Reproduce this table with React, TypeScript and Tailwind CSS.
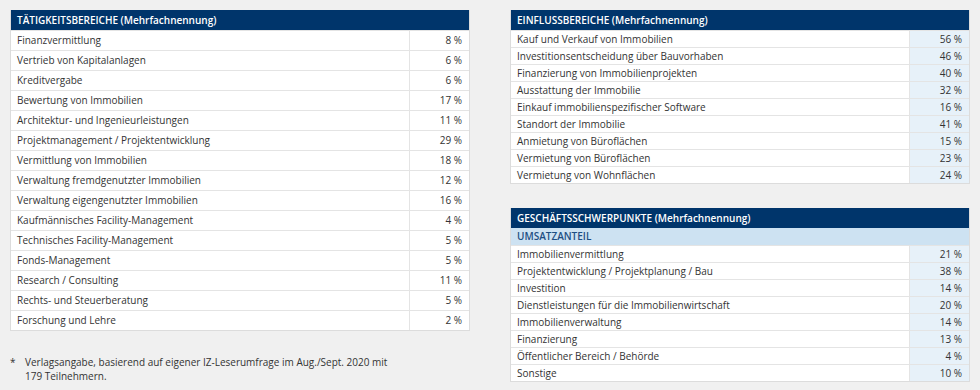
const taetigkeit: [string, string][] = [
  ['Finanzvermittlung', '8 %'],
  ['Vertrieb von Kapitalanlagen', '6 %'],
  ['Kreditvergabe', '6 %'],
  ['Bewertung von Immobilien', '17 %'],
  ['Architektur- und Ingenieurleistungen', '11 %'],
  ['Projektmanagement / Projektentwicklung', '29 %'],
  ['Vermittlung von Immobilien', '18 %'],
  ['Verwaltung fremdgenutzter Immobilien', '12 %'],
  ['Verwaltung eigengenutzter Immobilien', '16 %'],
  ['Kaufmännisches Facility-Management', '4 %'],
  ['Technisches Facility-Management', '5 %'],
  ['Fonds-Management', '5 %'],
  ['Research / Consulting', '11 %'],
  ['Rechts- und Steuerberatung', '5 %'],
  ['Forschung und Lehre', '2 %'],
];

const einfluss: [string, string][] = [
  ['Kauf und Verkauf von Immobilien', '56 %'],
  ['Investitionsentscheidung über Bauvorhaben', '46 %'],
  ['Finanzierung von Immobilienprojekten', '40 %'],
  ['Ausstattung der Immobilie', '32 %'],
  ['Einkauf immobilienspezifischer Software', '16 %'],
  ['Standort der Immobilie', '41 %'],
  ['Anmietung von Büroflächen', '15 %'],
  ['Vermietung von Büroflächen', '23 %'],
  ['Vermietung von Wohnflächen', '24 %'],
];

const schwerpunkte: [string, string][] = [
  ['Immobilienvermittlung', '21 %'],
  ['Projektentwicklung / Projektplanung / Bau', '38 %'],
  ['Investition', '14 %'],
  ['Dienstleistungen für die Immobilienwirtschaft', '20 %'],
  ['Immobilienverwaltung', '14 %'],
  ['Finanzierung', '13 %'],
  ['Öffentlicher Bereich / Behörde', '4 %'],
  ['Sonstige', '10 %'],
];

function Header({ title }: { title: string }) {
  return (
    <div className="h-[20px] bg-[#00356b] px-[6px] text-[10px] font-semibold leading-[20px] text-white">
      {title}
    </div>
  );
}

function Row({ label, value, tall, tinted }: { label: string; value: string; tall?: boolean; tinted?: boolean }) {
  return (
    <div className={`flex border-t border-[#e4e4e4] ${tall ? 'h-[20px] leading-[19px]' : 'h-[17px] leading-[16px]'}`}>
      <div className="flex-1 bg-white px-[6px]">{label}</div>
      <div className={`w-[60px] border-l border-[#e4e4e4] pr-[7px] text-right ${tinted ? 'bg-[#e7f1f9]' : 'bg-white'}`}>
        {value}
      </div>
    </div>
  );
}

export default function App() {
  return (
    <div
      className="flex h-[390px] w-[980px] gap-[40px] bg-[#f0f0f0] px-[10px] pt-[10px] text-[10px] text-[#333]"
      style={{ fontFamily: '"Open Sans", sans-serif' }}
    >
      <div className="flex w-[460px] flex-col">
        <div className="border border-t-0 border-[#dcdcdc] bg-white">
          <Header title="TÄTIGKEITSBEREICHE (Mehrfachnennung)" />
          {taetigkeit.map(([l, v], i) => (
            <Row key={i} label={l} value={v} tall />
          ))}
        </div>
        <div className="mt-[24px] flex leading-[14px]">
          <span className="w-[15px]">*</span>
          <span className="w-[380px]">
            Verlagsangabe, basierend auf eigener IZ-Leserumfrage im Aug./Sept. 2020 mit 179 Teilnehmern.
          </span>
        </div>
      </div>

      <div className="flex w-[460px] flex-col">
        <div className="border border-t-0 border-[#dcdcdc] bg-white">
          <Header title="EINFLUSSBEREICHE (Mehrfachnennung)" />
          {einfluss.map(([l, v], i) => (
            <Row key={i} label={l} value={v} tinted />
          ))}
        </div>
        <div className="mt-[24px] border border-t-0 border-[#dcdcdc] bg-white">
          <Header title="GESCHÄFTSSCHWERPUNKTE (Mehrfachnennung)" />
          <div className="h-[17px] bg-[#cde2f2] px-[6px] font-semibold leading-[17px] text-[#1d4f83]">UMSATZANTEIL</div>
          {schwerpunkte.map(([l, v], i) => (
            <Row key={i} label={l} value={v} tinted />
          ))}
        </div>
      </div>
    </div>
  );
}
